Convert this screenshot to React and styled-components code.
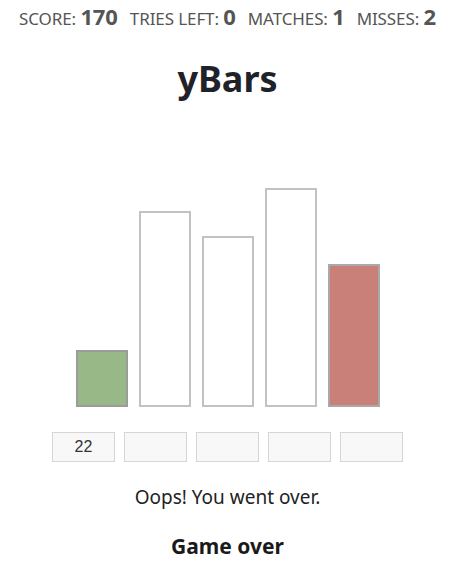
import React from "react";
import styled, { createGlobalStyle } from "styled-components";

const GlobalStyle = createGlobalStyle`
  html, body {
    margin: 0;
    padding: 0;
    background: #ffffff;
  }
  body {
    font-family: "Noto Sans", "Open Sans", sans-serif;
    color: #222;
  }
`;

const Page = styled.div`
  width: 455px;
  display: flex;
  flex-direction: column;
  align-items: center;
`;

const Stats = styled.div`
  display: flex;
  align-items: baseline;
  gap: 12px;
  margin-top: 4px;
  color: #555;
  font-size: 17px;
  line-height: 24px;
  letter-spacing: -0.1px;
`;

const Stat = styled.span`
  white-space: nowrap;
`;

const StatValue = styled.b`
  font-size: 22px;
  font-weight: 700;
  color: #555;
`;

const Title = styled.h1`
  margin: 24px 0 0;
  font-size: 36px;
  line-height: 48px;
  font-weight: 700;
  color: #1f2329;
`;

const Chart = styled.div`
  display: flex;
  align-items: flex-end;
  gap: 11px;
  height: 220px;
  margin-top: 84px;
`;

const Bar = styled.div`
  box-sizing: border-box;
  width: 52px;
  background: ${(p) => p.$fill};
  border: 2px solid ${(p) => p.$edge};
`;

const Guesses = styled.div`
  display: flex;
  gap: 9px;
  margin-top: 25px;
`;

const Guess = styled.input`
  box-sizing: border-box;
  width: 63px;
  height: 30px;
  margin: 0;
  padding: 0;
  background: #f8f8f8;
  border: 1px solid #d6d6d6;
  font-family: "Liberation Sans", Arial, sans-serif;
  font-size: 16px;
  color: #333;
  text-align: center;
  outline: none;
`;

const Message = styled.p`
  margin: 22px 0 0;
  font-size: 19px;
  line-height: 26px;
  color: #222;
`;

const Status = styled.h2`
  margin: 22px 0 0;
  font-size: 21px;
  line-height: 28px;
  font-weight: 700;
  color: #1a1a1a;
`;

const stats = [
  ["SCORE:", 170],
  ["TRIES LEFT:", 0],
  ["MATCHES:", 1],
  ["MISSES:", 2],
];

const bars = [
  { h: 57, fill: "#98b888", edge: "#9b9b9b" },
  { h: 196, fill: "#ffffff", edge: "#c2c2c2" },
  { h: 171, fill: "#ffffff", edge: "#c2c2c2" },
  { h: 219, fill: "#ffffff", edge: "#c2c2c2" },
  { h: 143, fill: "#c98079", edge: "#a9a9a9" },
];

const guesses = ["22", "", "", "", ""];

export default function App() {
  return (
    <>
      <GlobalStyle />
      <Page>
        <Stats>
          {stats.map(([label, value]) => (
            <Stat key={label}>
              {label} <StatValue>{value}</StatValue>
            </Stat>
          ))}
        </Stats>
        <Title>yBars</Title>
        <Chart>
          {bars.map((b, i) => (
            <Bar key={i} $fill={b.fill} $edge={b.edge} style={{ height: b.h }} />
          ))}
        </Chart>
        <Guesses>
          {guesses.map((g, i) => (
            <Guess key={i} defaultValue={g} readOnly />
          ))}
        </Guesses>
        <Message>Oops! You went over.</Message>
        <Status>Game over</Status>
      </Page>
    </>
  );
}
